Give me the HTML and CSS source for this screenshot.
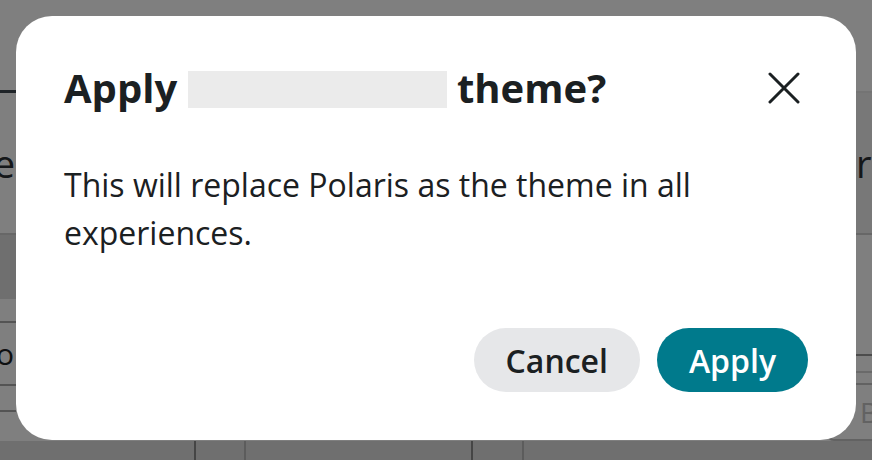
FILE: index.html
```html
<!DOCTYPE html>
<html lang="en">

<head>
    <meta charset="UTF-8">
    <meta name="viewport" content="width=device-width, initial-scale=1.0">
    <title>Apply theme</title>

    <link rel="stylesheet" href="styles.css">
</head>

<body>

    <!-- Page behind the dialog -->
    <div class="page">
        <div class="topbar">
            <div class="tab tab-active"></div>
            <div class="tab"></div>
        </div>

        <div class="title-row">
            <div class="edge edge-left"><span>Theme</span></div>
            <div class="edge edge-right"><span>r</span></div>
        </div>

        <div class="band-row">
            <div class="edge edge-left band"></div>
            <div class="edge edge-right"></div>
        </div>

        <div class="table-row">
            <div class="edge edge-left cells">
                <div class="cell cell-top"></div>
                <div class="cell cell-text"><span>Logo</span></div>
                <div class="cell cell-bottom"></div>
            </div>
            <div class="edge edge-right cells">
                <div class="cell cell-tall"></div>
                <div class="cell cell-thin"></div>
                <div class="cell cell-btn"><span class="ghost-btn">B</span></div>
            </div>
        </div>

        <div class="table-foot">
            <span class="col" style="width: 194px"></span>
            <span class="col col-light" style="width: 48px"></span>
            <span class="col" style="width: 225px"></span>
            <span class="col col-light" style="width: 49px"></span>
        </div>
    </div>

    <!-- Modal -->
    <div class="overlay">
        <div class="dialog" role="dialog" aria-labelledby="dialog-title">
            <div class="dialog-header">
                <h2 id="dialog-title">Apply <span class="redacted"></span> theme?</h2>
                <button class="close-btn" aria-label="Close">
                    <svg width="32" height="32" viewBox="0 0 32 32" fill="none" stroke="#1b2022"
                        stroke-width="3" stroke-linecap="round">
                        <path d="M2 2 L30 30 M30 2 L2 30" />
                    </svg>
                </button>
            </div>

            <p class="dialog-body">This will replace Polaris as the theme in all experiences.</p>

            <div class="dialog-footer">
                <button class="btn btn-secondary">Cancel</button>
                <button class="btn btn-primary">Apply</button>
            </div>
        </div>
    </div>

</body>

</html>
```

FILE: styles.css
```css
/* General Styling */
body {
    font-family: 'Open Sans', 'Noto Sans', sans-serif;
    background-color: #ffffff;
    margin: 0;
    padding: 0;
    color: #1b2022;
}

/* Background Page */
.page {
    height: 460px;
    overflow: hidden;
    display: flex;
    flex-direction: column;
}

.topbar {
    height: 91px;
    display: flex;
    border-bottom: 2px solid #e8e8e8;
}

.tab-active {
    width: 16px;
    border-bottom: 3px solid #3e4850;
    margin-bottom: -2px;
}

.title-row,
.band-row,
.table-row {
    display: flex;
    justify-content: space-between;
}

.title-row {
    height: 140px;
    border-bottom: 2px solid #cfcfcf;
}

.edge {
    width: 16px;
    overflow: hidden;
    display: flex;
}

.edge-left {
    justify-content: flex-end;
}

.edge-right {
    width: 46px;
    justify-content: flex-start;
}

.edge span {
    white-space: nowrap;
}

.title-row .edge {
    align-items: center;
    font-size: 38px;
    color: #2a2f33;
}

.title-row .edge-left {
    width: 15px;
}

.title-row .edge-right {
    background-color: #f0f0f0;
    padding-left: 30px;
    box-sizing: border-box;
}

.band-row {
    height: 64px;
}

.band {
    background-color: #dedede;
}

.table-row {
    height: 142px;
}

.cells {
    flex-direction: column;
    justify-content: flex-start;
}

.cell-top {
    height: 22px;
    border-bottom: 2px solid #a8a8a8;
}

.cell-text {
    height: 61px;
    border-bottom: 2px solid #a8a8a8;
    display: flex;
    justify-content: flex-end;
    align-items: center;
    font-size: 30px;
    color: #1b2022;
}

.cell-text span {
    margin-right: 2px;
}

.cell-bottom {
    height: 24px;
    border-bottom: 2px solid #a8a8a8;
}

.cell-tall {
    height: 63px;
    border-bottom: 2px solid #999999;
}

.cell-thin {
    height: 17px;
    border-bottom: 2px solid #d4d4d4;
}

.cell-btn {
    padding-top: 10px;
}

.ghost-btn {
    display: inline-block;
    width: 70px;
    height: 58px;
    box-sizing: border-box;
    padding: 8px 0 0 32px;
    border: 2px solid #c4c4c4;
    border-radius: 8px;
    font-size: 28px;
    color: #c4c4c4;
}

.table-foot {
    flex: 1;
    display: flex;
    background-color: #dedede;
}

.col {
    border-right: 2px solid #8a8a8a;
}

.col-light {
    border-right-color: #b8b8b8;
}

/* Overlay */
.overlay {
    position: fixed;
    inset: 0;
    background-color: rgba(0, 0, 0, 0.5);
    padding: 16px;
}

/* Dialog */
.dialog {
    background-color: #ffffff;
    height: 424px;
    box-sizing: border-box;
    border-radius: 36px;
    padding: 46px 48px 48px;
    display: flex;
    flex-direction: column;
}

.dialog-header {
    display: flex;
    align-items: center;
    justify-content: space-between;
}

h2 {
    margin: 0;
    font-size: 40px;
    line-height: 52px;
    font-weight: 700;
    color: #1b2022;
}

.redacted {
    display: inline-block;
    width: 259px;
    height: 37px;
    background-color: #ebebeb;
    vertical-align: -5px;
}

.close-btn {
    width: 48px;
    height: 48px;
    padding: 0;
    border: none;
    background: none;
    display: flex;
    align-items: center;
    justify-content: center;
    cursor: pointer;
}

.dialog-body {
    margin: 47px 0 0;
    font-size: 32px;
    line-height: 48px;
}

/* Buttons */
.dialog-footer {
    margin-top: auto;
    display: flex;
    justify-content: flex-end;
    gap: 17px;
}

.btn {
    height: 64px;
    padding: 0 32px;
    border: none;
    border-radius: 32px;
    font-family: 'Open Sans', 'Noto Sans', sans-serif;
    font-size: 32px;
    font-weight: 600;
    cursor: pointer;
}

.btn-secondary {
    background-color: #e6e7e9;
    color: #1b2022;
}

.btn-primary {
    background-color: #007a8c;
    color: #ffffff;
}
```
